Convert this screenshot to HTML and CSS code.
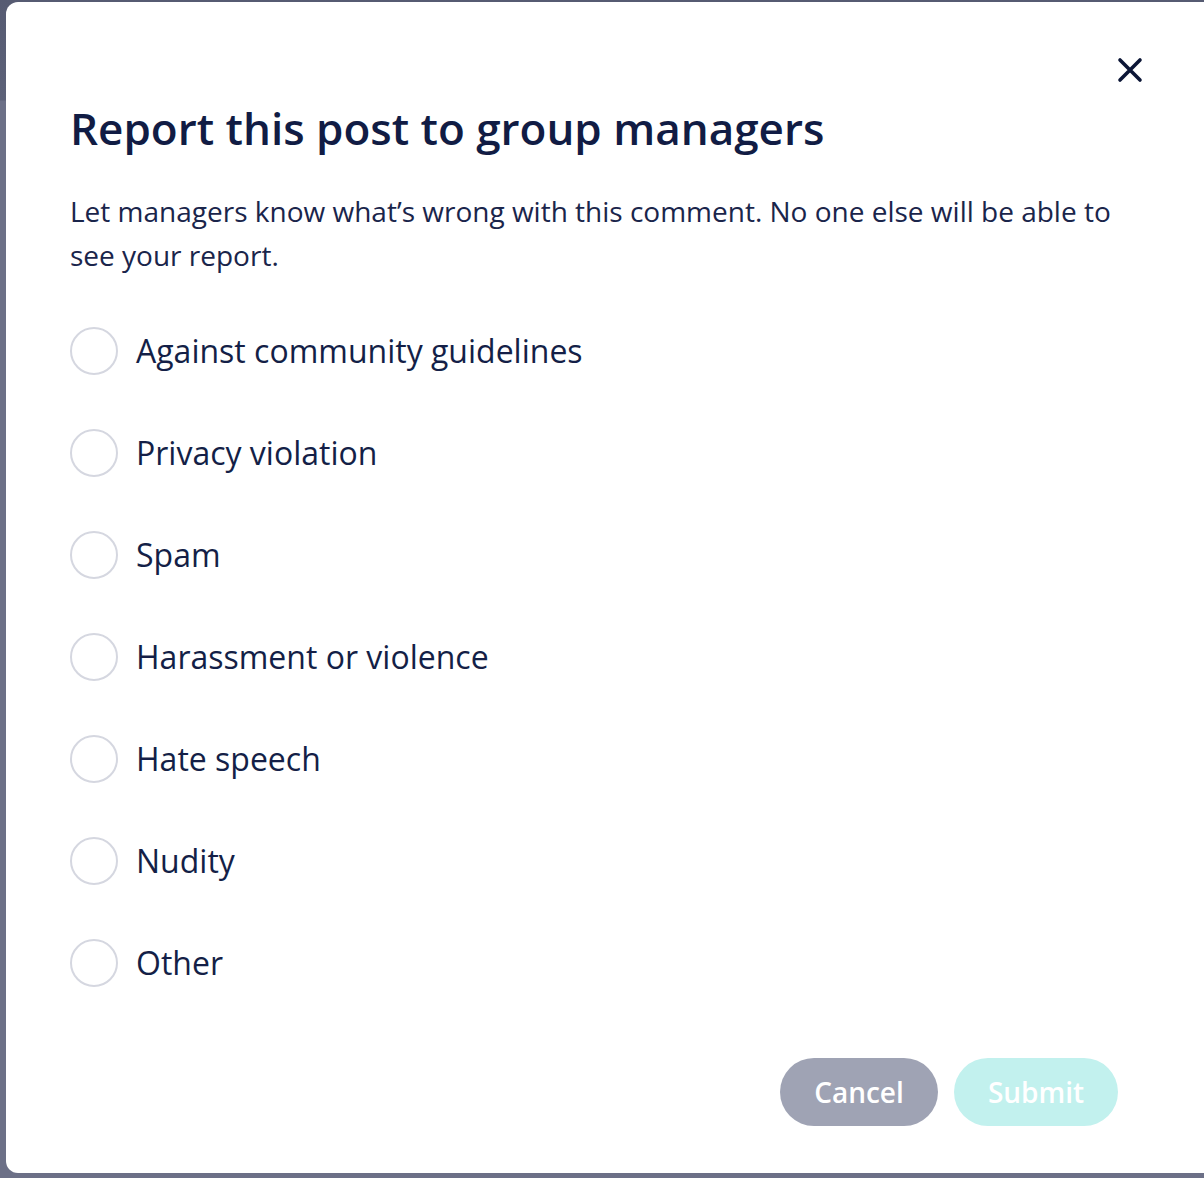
FILE: index.html
```html
<!DOCTYPE html>
<html lang="en">
<head>
<meta charset="utf-8">
<title>Report post</title>
<link rel="stylesheet" href="styles.css">
</head>
<body>
<div class="backdrop">
  <div class="modal" role="dialog" aria-labelledby="dlg-title">
    <button class="close" type="button" aria-label="Close">
      <svg width="26" height="26" viewBox="0 0 26 26" aria-hidden="true">
        <path d="M3 3 L23 23 M23 3 L3 23" stroke="#0c1636" stroke-width="3.6" stroke-linecap="round" fill="none"/>
      </svg>
    </button>
    <h1 id="dlg-title" class="title">Report this post to group managers</h1>
    <p class="desc">Let managers know what’s wrong with this comment. No one else will be able to see your report.</p>
    <ul class="options">
      <li class="option"><span class="radio"></span><span class="label">Against community guidelines</span></li>
      <li class="option"><span class="radio"></span><span class="label">Privacy violation</span></li>
      <li class="option"><span class="radio"></span><span class="label">Spam</span></li>
      <li class="option"><span class="radio"></span><span class="label">Harassment or violence</span></li>
      <li class="option"><span class="radio"></span><span class="label">Hate speech</span></li>
      <li class="option"><span class="radio"></span><span class="label">Nudity</span></li>
      <li class="option"><span class="radio"></span><span class="label">Other</span></li>
    </ul>
    <div class="actions">
      <button class="btn btn-cancel" type="button">Cancel</button>
      <button class="btn btn-submit" type="button" disabled>Submit</button>
    </div>
  </div>
</div>
</body>
</html>
```
FILE: styles.css
```css
* { box-sizing: border-box; }
html, body { margin: 0; padding: 0; }
body {
  width: 1204px;
  height: 1178px;
  overflow: hidden;
  background: #6c7087;
  font-family: "Open Sans", "Noto Sans", sans-serif;
  color: #121d45;
}
.backdrop {
  height: 1178px;
  padding: 2px 0 0 6px;
  background: linear-gradient(to bottom, #565b72 0px, #5c6178 100px, #6c7087 101px, #6c7087 100%);
}
.modal {
  position: relative;
  width: 1210px;
  height: 1171px;
  background: #ffffff;
  border-radius: 12px;
  padding: 90px 98px 0 64px;
}
.close {
  position: absolute;
  top: 55px;
  left: 1111px;
  width: 26px;
  height: 26px;
  padding: 0;
  border: 0;
  background: none;
  display: flex;
}
.title {
  margin: 0;
  font-size: 44px;
  font-weight: 600;
  line-height: 72px;
  color: #111c44;
}
.desc {
  margin: 25px 0 0 0;
  width: 1060px;
  font-size: 28px;
  line-height: 44px;
  font-weight: 400;
  color: #1a254b;
}
.options {
  list-style: none;
  margin: 50px 0 0 0;
  padding: 0;
  display: flex;
  flex-direction: column;
  gap: 54px;
}
.option {
  display: flex;
  align-items: center;
  gap: 18px;
  height: 48px;
}
.radio {
  flex: 0 0 48px;
  width: 48px;
  height: 48px;
  border-radius: 50%;
  border: 2px solid #d5d7e0;
  background: #fff;
}
.label {
  font-size: 32px;
  line-height: 48px;
  color: #141f47;
}
.actions {
  display: flex;
  justify-content: flex-end;
  gap: 16px;
  margin-top: 71px;
}
.btn {
  height: 68px;
  border: 0;
  border-radius: 34px;
  font-family: "Open Sans", "Noto Sans", sans-serif;
  font-size: 28px;
  font-weight: 600;
  color: #ffffff;
  padding: 0;
}
.btn-cancel {
  width: 158px;
  background: #9fa3b4;
}
.btn-submit {
  width: 164px;
  background: #c2f1ee;
}
```
